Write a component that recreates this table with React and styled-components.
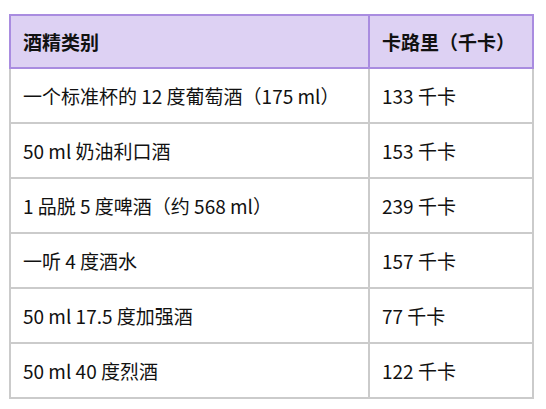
import React from "react";
import styled, { createGlobalStyle } from "styled-components";

const Global = createGlobalStyle`
  html, body { margin: 0; padding: 0; background: #fff; }
  body { font-family: "Noto Sans CJK SC", "Noto Sans", sans-serif; color: #111; }
`;

const Page = styled.div`
  padding: 14px 12px 0 9px;
`;

const Table = styled.table`
  border-collapse: collapse;
  width: 525px;
  font-size: 19px;
  line-height: 24px;
`;

const HeadCell = styled.th`
  background: #ddd1f3;
  border: 2px solid #a98ce0;
  text-align: left;
  font-weight: 700;
  height: 51px;
  padding: 0 12px;
  width: ${(p) => p.$w || "auto"};
`;

const Cell = styled.td`
  border: 2px solid #cbcbcb;
  border-top: ${(p) => (p.$first ? "none" : "2px solid #cbcbcb")};
  height: 53px;
  padding: 0 12px;
`;

const rows = [
  ["一个标准杯的 12 度葡萄酒（175 ml）", "133 千卡"],
  ["50 ml 奶油利口酒", "153 千卡"],
  ["1 品脱 5 度啤酒（约 568 ml）", "239 千卡"],
  ["一听 4 度酒水", "157 千卡"],
  ["50 ml 17.5 度加强酒", "77 千卡"],
  ["50 ml 40 度烈酒", "122 千卡"],
];

export default function App() {
  return (
    <>
      <Global />
      <Page>
        <Table>
          <thead>
            <tr>
              <HeadCell $w="333px">酒精类别</HeadCell>
              <HeadCell>卡路里（千卡）</HeadCell>
            </tr>
          </thead>
          <tbody>
            {rows.map((r, i) => (
              <tr key={i}>
                <Cell $first={i === 0}>{r[0]}</Cell>
                <Cell $first={i === 0}>{r[1]}</Cell>
              </tr>
            ))}
          </tbody>
        </Table>
      </Page>
    </>
  );
}
